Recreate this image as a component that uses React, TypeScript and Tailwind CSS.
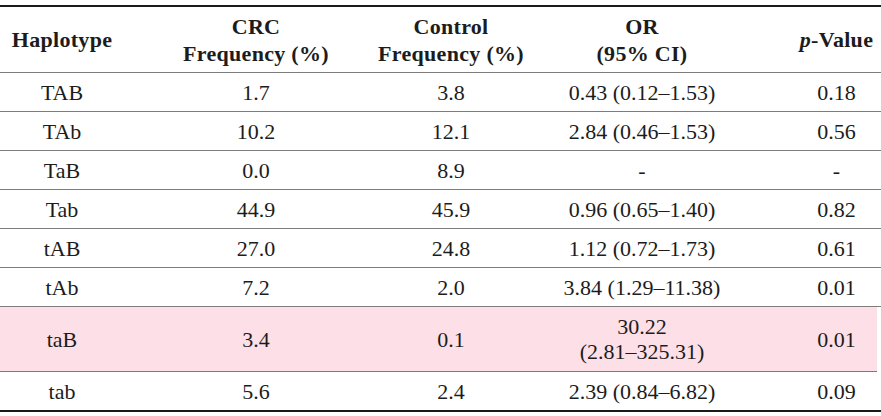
const rows = [
  { h: "TAB", crc: "1.7", ctl: "3.8", or: ["0.43 (0.12–1.53)"], p: "0.18" },
  { h: "TAb", crc: "10.2", ctl: "12.1", or: ["2.84 (0.46–1.53)"], p: "0.56" },
  { h: "TaB", crc: "0.0", ctl: "8.9", or: ["-"], p: "-" },
  { h: "Tab", crc: "44.9", ctl: "45.9", or: ["0.96 (0.65–1.40)"], p: "0.82" },
  { h: "tAB", crc: "27.0", ctl: "24.8", or: ["1.12 (0.72–1.73)"], p: "0.61" },
  { h: "tAb", crc: "7.2", ctl: "2.0", or: ["3.84 (1.29–11.38)"], p: "0.01" },
  { h: "taB", crc: "3.4", ctl: "0.1", or: ["30.22", "(2.81–325.31)"], p: "0.01", hl: true },
  { h: "tab", crc: "5.6", ctl: "2.4", or: ["2.39 (0.84–6.82)"], p: "0.09", last: true },
];

const cols = ["w-[124px]", "w-[264px]", "w-[126px]", "w-[256px]", "w-[111px] pl-[22px]"];

function Cell({ i, children }: { i: number; children: React.ReactNode }) {
  return (
    <div className={`${cols[i]} shrink-0 flex flex-col items-center justify-center whitespace-nowrap`}>
      {children}
    </div>
  );
}

export default function App() {
  return (
    <div
      className="w-[881px] h-[416px] bg-white pt-[5px] text-[#1c1c1c]"
      style={{ fontFamily: '"Liberation Serif", "Times New Roman", serif' }}
    >
      <div className="border-t-2 border-[#1a1a1a]">
        {/* header */}
        <div className="flex h-[66px] border-b border-[#7d7d7d] font-bold text-[22px] leading-[27px] tracking-[0.3px]">
          <Cell i={0}>Haplotype</Cell>
          <Cell i={1}>
            <span>CRC</span>
            <span>Frequency (%)</span>
          </Cell>
          <Cell i={2}>
            <span>Control</span>
            <span>Frequency (%)</span>
          </Cell>
          <Cell i={3}>
            <span>OR</span>
            <span>(95% CI)</span>
          </Cell>
          <Cell i={4}>
            <span>
              <i>p</i>-Value
            </span>
          </Cell>
        </div>

        {rows.map((r) => (
          <div
            key={r.h}
            className={`flex text-[22px] leading-[25px] ${
              r.hl
                ? "h-[65px] bg-[#fde0e7] border-b border-[#8a7479] mr-[4px]"
                : r.last
                ? "h-[40px] border-b-2 border-[#1a1a1a]"
                : "h-[39px] border-b border-[#7d7d7d]"
            }`}
          >
            <Cell i={0}>{r.h}</Cell>
            <Cell i={1}>{r.crc}</Cell>
            <Cell i={2}>{r.ctl}</Cell>
            <Cell i={3}>
              {r.or.map((t) => (
                <span key={t}>{t}</span>
              ))}
            </Cell>
            <Cell i={4}>{r.p}</Cell>
          </div>
        ))}
      </div>
    </div>
  );
}
